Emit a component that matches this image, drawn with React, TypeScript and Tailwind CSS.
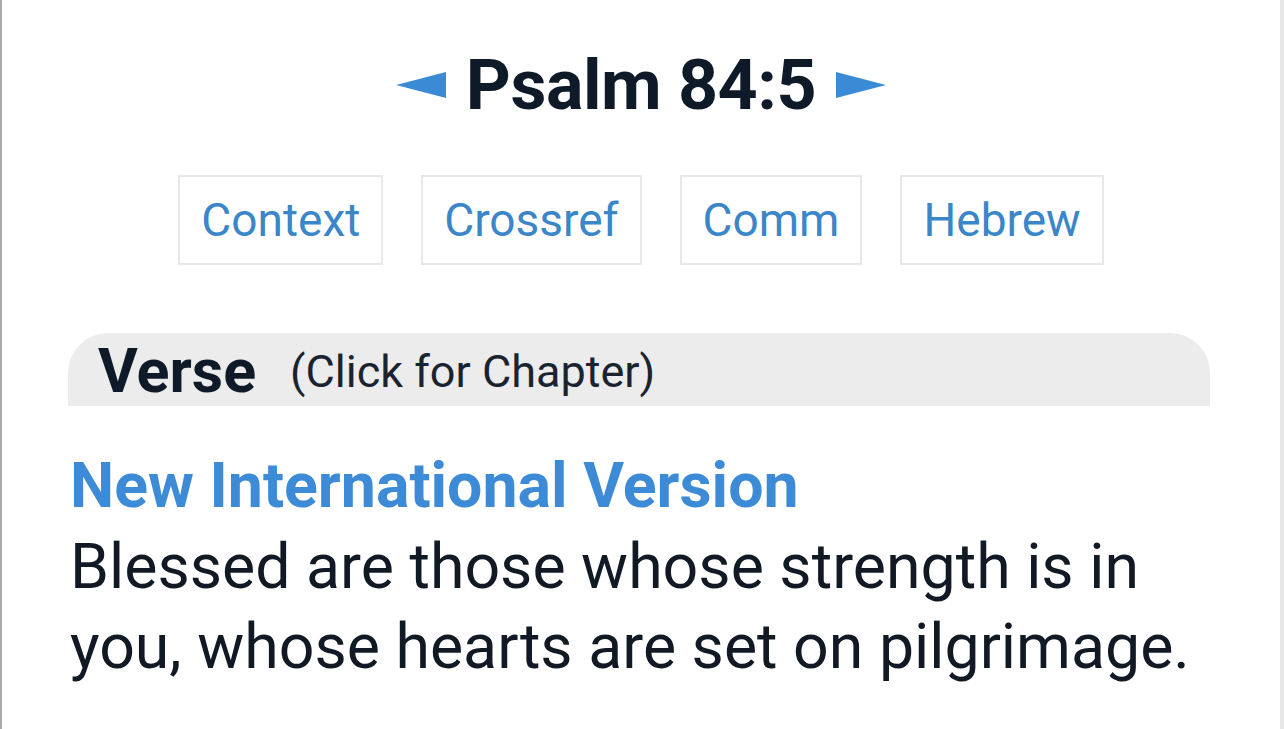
import React from "react";

const tabs = ["Context", "Crossref", "Comm", "Hebrew"];

const Arrow = ({ dir }: { dir: "left" | "right" }) => (
  <svg width="50" height="26" viewBox="0 0 50 26" className="shrink-0">
    {dir === "left" ? (
      <polygon points="0,13 50,0 50,26" fill="#3b8ad6" />
    ) : (
      <polygon points="50,13 0,0 0,26" fill="#3b8ad6" />
    )}
  </svg>
);

export default function App() {
  return (
    <div
      className="h-[729px] w-[1284px] overflow-hidden bg-white border-l-2 border-l-[#a9a9a9] border-r-4 border-r-[#e6e6e6]"
      style={{ fontFamily: "Roboto, 'Noto Sans', sans-serif" }}
    >
      <div className="flex items-center justify-center gap-[20px] pt-[46px] h-[124px]">
        <Arrow dir="left" />
        <h1 className="text-[70px] font-bold leading-none text-[#0e1a28] tracking-[-0.5px]">
          Psalm 84:5
        </h1>
        <Arrow dir="right" />
      </div>

      <div className="flex justify-center gap-[38px] mt-[51px]">
        {tabs.map((t) => (
          <div
            key={t}
            className="h-[90px] px-[21px] flex items-center border-2 border-[#e8e8e8] text-[46px] text-[#3a86c8]"
          >
            {t}
          </div>
        ))}
      </div>

      <div className="ml-[66px] mr-[70px] mt-[68px] h-[73px] bg-[#ececec] rounded-t-[40px] flex items-center pl-[30px] pt-[4px]">
        <span className="text-[61px] font-bold text-[#0e1a28] leading-none">Verse</span>
        <span className="ml-[34px] text-[45px] text-[#1a2430] leading-none">(Click for Chapter)</span>
      </div>

      <div className="pl-[68px] pt-[40px]">
        <h2 className="text-[62.6px] font-bold text-[#3d8bd6] leading-[80px]">
          New International Version
        </h2>
        <p className="w-[1160px] text-[62.6px] text-[#111a24] leading-[80px] mt-[1px]">
          Blessed are those whose strength is in you, whose hearts are set on pilgrimage.
        </p>
      </div>
    </div>
  );
}
